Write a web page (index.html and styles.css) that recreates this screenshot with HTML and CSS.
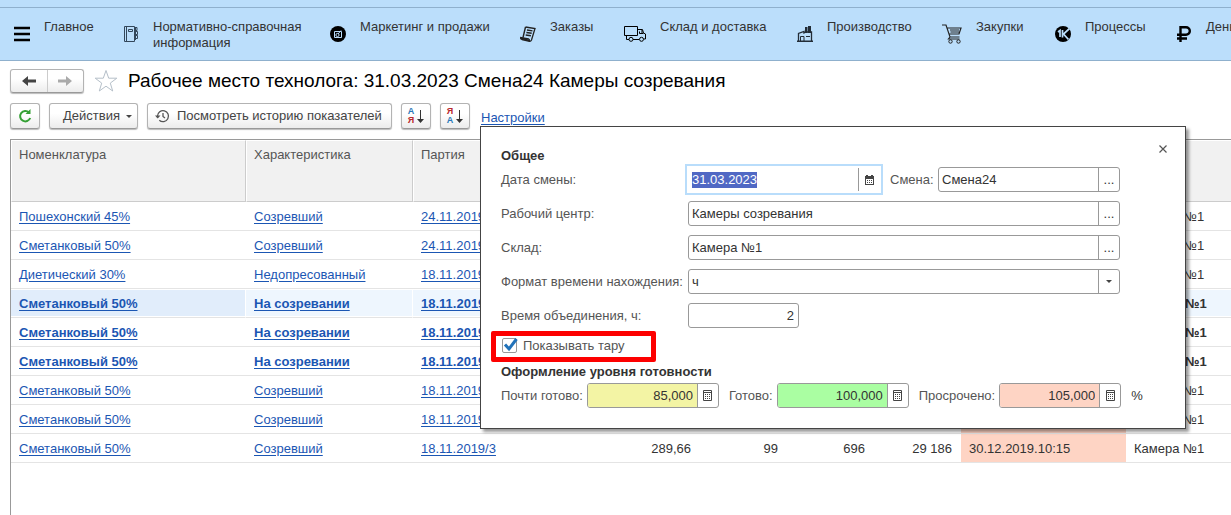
FILE: index.html
```html
<!DOCTYPE html>
<html lang="ru">
<head>
<meta charset="utf-8">
<title>Рабочее место технолога</title>
<link rel="stylesheet" href="styles.css">
</head>
<body>
<svg class="defs" width="0" height="0" aria-hidden="true">
  <symbol id="calc" viewBox="0 0 9 11">
    <path d="M.5.5h8v10h-8zM1 2.500h7" fill="none" stroke="#444"/>
    <path d="M2 4h1v1H2zM4 4h1v1H4zM6 4h1v1H6zM2 6h1v1H2zM4 6h1v1H4zM6 6h1v1H6zM2 8h1v1H2zM4 8h1v1H4zM6 8h1v1H6z" fill="#444"/>
  </symbol>
</svg>
<header class="top">
  <nav class="sections" aria-label="Разделы">
    <a class="section" href="#"><svg width="16" height="16" viewBox="0 0 16 16"><path d="M0 2h16M0 8h16M0 14h16" stroke="#000" stroke-width="2.4"/></svg><span>Главное</span></a>
    <a class="section" href="#"><svg width="16" height="16" viewBox="0 0 16 16"><path d="M1.500 .5h10v15h-10zM3.500 .5v15M5.500 3.500h4v2h-4zM12 1.500h2v3h-2M12 5.500h2.500v3H12M12 9.500h2.500v3H12" fill="none" stroke="#33475a"/><path d="M11 1h2v13h-2z" fill="#33475a"/></svg><span>Нормативно-справочная информация</span></a>
    <a class="section" href="#"><svg width="16" height="16" viewBox="0 0 16 16"><circle cx="8" cy="8" r="8"/><path d="M4.500 5.500h7v6h-7z" fill="none" stroke="#bbdefb"/><circle cx="7.500" cy="9" r="1.600" fill="none" stroke="#bbdefb"/><path d="M8 8l3-3.500" stroke="#bbdefb"/></svg><span>Маркетинг и продажи</span></a>
    <a class="section" href="#"><svg width="16" height="16" viewBox="0 0 16 16"><path d="M5.500 1l9.500 1.500-3.500 11.500q-.7 1.500-2 1.300L2 13.500Q.3 13 .7 11.500l8 1.500q1 .3.500 2" fill="none" stroke="#222" stroke-width="1.300"/><path d="M5.500 1L3 11.500M7 4l5.500.9M6.400 6.500l5.300.8M5.700 9l5.200.8M1 12l8 2.500" stroke="#222" stroke-width="1.400"/></svg><span>Заказы</span></a>
    <a class="section" href="#"><svg width="22" height="16" viewBox="0 0 22 16"><path d="M.5 .5h13v9H.5zM14 3.500h4.500l1 3.500 2 1v5h-2M2.500 10v3.500H5M9 13.500h6M15.500 5.500v2h4M18 4v3" fill="none" stroke="#000"/><circle cx="7" cy="13.300" r="2" fill="#bbdefb" stroke="#000"/><circle cx="17.500" cy="13.300" r="2" fill="#bbdefb" stroke="#000"/></svg><span>Склад и доставка</span></a>
    <a class="section" href="#"><svg width="16" height="16" viewBox="0 0 16 16"><path d="M1.500 15V7.500l5.500-2V7l2-1h5.500v9" fill="none" stroke="#222c36" stroke-width="1.300"/><path d="M8 1h2.500v6H8zM11 0h3v7h-3zM0 14.500h16V16H0z" fill="#222c36"/><path d="M3.500 15v-4.500H7V15M9 10.500h4" fill="none" stroke="#222c36"/></svg><span>Производство</span></a>
    <a class="section" href="#"><svg width="20" height="20" viewBox="0 0 20 20"><path d="M0 1h4l4 12h9.500M5 4h14l-2 6H7M8 6h9M8.500 8H17M8 13l-1.500 2h11" fill="none" stroke="#222" stroke-width="1.200"/><circle cx="8.500" cy="17.500" r="1.700" fill="none" stroke="#222"/><circle cx="16.500" cy="17.500" r="1.700" fill="none" stroke="#222"/></svg><span>Закупки</span></a>
    <a class="section" href="#"><svg width="16" height="16" viewBox="0 0 16 16"><circle cx="8" cy="8" r="8"/><path d="M3 6l2-1.500V11M7.500 4v7.500M14.500 2.500L8.500 8l5 5.500" fill="none" stroke="#bbdefb" stroke-width="1.700"/></svg><span>Процессы</span></a>
    <a class="section" href="#"><svg width="16" height="16" viewBox="0 0 16 16"><path d="M4.500 16V1.200H10a3.700 3.700 0 010 7.600H1M1 12.500h10" fill="none" stroke="#000" stroke-width="2.400"/></svg><span>Деньги</span></a>
  </nav>
</header>
<main class="work">
  <div class="titlebar">
    <div class="history">
      <button class="hbtn" aria-label="Назад"><svg width="14" height="10" viewBox="0 0 14 10"><path d="M0 5l6-5v3.500h8v3H6V10z" fill="#444"/></svg></button>
      <button class="hbtn" aria-label="Вперед"><svg width="14" height="10" viewBox="0 0 14 10"><path d="M14 5L8 0v3.500H0v3h8V10z" fill="#aaa"/></svg></button>
    </div>
    <button class="star" aria-label="В избранное"><svg width="24" height="24" viewBox="0 0 24 24"><path d="M12 1.500l2.700 7.700h8.100l-6.500 4.900 2.400 7.900L12 17.200l-6.700 4.800 2.400-7.900L1.200 9.200h8.100z" fill="#fff" stroke="#b5bfc9"/></svg></button>
    <h1>Рабочее место технолога: 31.03.2023 Смена24 Камеры созревания</h1>
  </div>
  <div class="toolbar">
    <button class="btn square" aria-label="Обновить"><svg width="14" height="14" viewBox="0 0 14 14"><path d="M11 3.500A5.200 5.200 0 1012.200 9" fill="none" stroke="#35a035" stroke-width="2"/><path d="M7.500 5h5V0z" fill="#35a035"/></svg></button>
    <button class="btn actions">Действия <svg width="6" height="3" viewBox="0 0 6 3"><path d="M0 0h6L3 3z" fill="#444"/></svg></button>
    <button class="btn past"><svg width="15" height="14" viewBox="0 0 15 14"><path d="M2.500 8.500V7a5.500 5.500 0 111.800 4.200M8 4v3.500l2 1.500" fill="none" stroke="#555" stroke-width="1.300"/><path d="M0 6.500h5.500L2.700 9.500z" fill="#555"/></svg>Посмотреть историю показателей</button>
    <button class="btn square" aria-label="Сортировать по возрастанию"><span class="sort"><span class="pair"><i class="blue">А</i><i class="red">Я</i></span><svg width="7" height="13" viewBox="0 0 7 13"><path d="M3.500 0v10" stroke="#333"/><path d="M0 9h7l-3.500 4z" fill="#333"/></svg></span></button>
    <button class="btn square" aria-label="Сортировать по убыванию"><span class="sort"><span class="pair"><i class="red">Я</i><i class="blue">А</i></span><svg width="7" height="13" viewBox="0 0 7 13"><path d="M3.500 0v10" stroke="#333"/><path d="M0 9h7l-3.500 4z" fill="#333"/></svg></span></button>
    <a class="link" href="#">Настройки</a>
  </div>
  <div class="gridbox">
    <table>
      <colgroup><col class="c-name"><col class="c-char"><col class="c-lot"><col class="c-num"><col class="c-num"><col class="c-num"><col class="c-num"><col class="c-date"><col></colgroup>
      <thead><tr><th>Номенклатура</th><th>Характеристика</th><th>Партия</th><th></th><th></th><th></th><th></th><th></th><th></th></tr></thead>
      <tbody>
        <tr><td><a href="#">Пошехонский 45%</a></td><td><a href="#">Созревший</a></td><td><a href="#">24.11.2019</a></td><td></td><td></td><td></td><td></td><td></td><td>Камера №1</td></tr>
        <tr><td><a href="#">Сметанковый 50%</a></td><td><a href="#">Созревший</a></td><td><a href="#">24.11.2019</a></td><td></td><td></td><td></td><td></td><td></td><td>Камера №1</td></tr>
        <tr><td><a href="#">Диетический 30%</a></td><td><a href="#">Недопресованный</a></td><td><a href="#">18.11.2019</a></td><td></td><td></td><td></td><td></td><td></td><td>Камера №1</td></tr>
        <tr class="bold current"><td><a href="#">Сметанковый 50%</a></td><td><a href="#">На созревании</a></td><td><a href="#">18.11.2019</a></td><td></td><td></td><td></td><td></td><td></td><td>Камера №1</td></tr>
        <tr class="bold"><td><a href="#">Сметанковый 50%</a></td><td><a href="#">На созревании</a></td><td><a href="#">18.11.2019</a></td><td></td><td></td><td></td><td></td><td></td><td>Камера №1</td></tr>
        <tr class="bold"><td><a href="#">Сметанковый 50%</a></td><td><a href="#">На созревании</a></td><td><a href="#">18.11.2019</a></td><td></td><td></td><td></td><td></td><td></td><td>Камера №1</td></tr>
        <tr><td><a href="#">Сметанковый 50%</a></td><td><a href="#">Созревший</a></td><td><a href="#">18.11.2019</a></td><td></td><td></td><td></td><td></td><td></td><td>Камера №1</td></tr>
        <tr><td><a href="#">Сметанковый 50%</a></td><td><a href="#">Созревший</a></td><td><a href="#">18.11.2019</a></td><td></td><td></td><td></td><td></td><td class="late"></td><td>Камера №1</td></tr>
        <tr><td><a href="#">Сметанковый 50%</a></td><td><a href="#">Созревший</a></td><td><a href="#">18.11.2019/3</a></td><td class="num">289,66</td><td class="num">99</td><td class="num">696</td><td class="num">29 186</td><td class="late">30.12.2019.10:15</td><td>Камера №1</td></tr>
      </tbody>
    </table>
  </div>
</main>
<form class="popup">
  <button type="button" class="close" aria-label="Закрыть"><svg width="8" height="8" viewBox="0 0 8 8"><path d="M.5 .5l7 7M7.500 .5l-7 7" stroke="#555" stroke-width="1.200"/></svg></button>
  <h2>Общее</h2>
  <div class="fields">
    <label for="date">Дата смены:</label>
    <div class="pairrow">
      <div class="field focus"><input id="date" value="31.03.2023"><button type="button" aria-label="Календарь"><svg width="9" height="10" viewBox="0 0 9 10"><path d="M0 1h9v9H0z" fill="#444"/><path d="M1 4h7v5H1z" fill="#fff"/><path d="M1 0h2v2H1zM6 0h2v2H6zM2 5h1v1H2zM4 5h1v1H4zM6 5h1v1H6zM2 7h1v1H2zM4 7h1v1H4zM6 7h1v1H6z" fill="#444"/></svg></button></div>
      <label for="shift">Смена:</label>
      <div class="field shift"><input id="shift" value="Смена24"><button type="button" aria-label="Выбрать смену">...</button></div>
    </div>
    <label for="center">Рабочий центр:</label>
    <div class="field"><input id="center" value="Камеры созревания"><button type="button" aria-label="Выбрать центр">...</button></div>
    <label for="store">Склад:</label>
    <div class="field"><input id="store" value="Камера №1"><button type="button" aria-label="Выбрать склад">...</button></div>
    <label for="format">Формат времени нахождения:</label>
    <div class="field"><select id="format"><option>ч</option></select><span class="drop"><svg width="6" height="3" viewBox="0 0 6 3"><path d="M0 0h6L3 3z" fill="#444"/></svg></span></div>
    <label for="merge">Время объединения, ч:</label>
    <div class="field short"><input id="merge" class="right" value="2"></div>
  </div>
  <label class="check"><span class="box"><input type="checkbox" checked><svg width="16" height="15" viewBox="0 0 16 15"><path d="M3 6.500l4 4.500 7.500-10" fill="none" stroke="#2272b9" stroke-width="3"/></svg></span>Показывать тару</label>
  <h2>Оформление уровня готовности</h2>
  <div class="levels">
    <label for="almost">Почти готово:</label>
    <div class="field level"><input id="almost" class="right yellow" value="85,000"><button type="button" aria-label="Калькулятор"><svg width="9" height="11"><use href="#calc"/></svg></button></div>
    <label for="ready">Готово:</label>
    <div class="field level"><input id="ready" class="right green" value="100,000"><button type="button" aria-label="Калькулятор"><svg width="9" height="11"><use href="#calc"/></svg></button></div>
    <label for="late">Просрочено:</label>
    <div class="field level last"><input id="late" class="right pink" value="105,000"><button type="button" aria-label="Калькулятор"><svg width="9" height="11"><use href="#calc"/></svg></button></div>
    <span>%</span>
  </div>
</form>
<script src="script.js"></script>
</body>
</html>
```
FILE: styles.css
```css
* { box-sizing: border-box; }
body {
  margin: 0;
  height: 100vh;
  overflow: hidden;
  display: flex;
  flex-direction: column;
  position: relative;
  font: 13px/16px "Liberation Sans", Arial, sans-serif;
  color: #333;
  background: #fff;
}
button, input, select { font: inherit; color: inherit; }
button { padding: 0; border: 0; background: none; }
svg { display: block; flex: none; }
.defs { position: absolute; }
h1, h2 { margin: 0; }

.top { flex: none; background: #bbdefb; padding-top: 7px; border-bottom: 1px solid #8fb0cd; }
.sections {
  display: grid;
  grid-template-columns: 109px 207px 190px 104px 173px 145px 113px 121px auto;
  border-top: 1px solid #8fb0cd;
  padding-left: 14px;
  height: 53px;
  overflow: hidden;
}
.section { display: flex; gap: 14px; color: #333; text-decoration: none; align-items: center; }
.section span { align-self: start; padding-top: 11px; }

.work { flex: 1; min-height: 0; display: flex; flex-direction: column; padding: 8px 0 0 10px; }
.titlebar { display: flex; align-items: center; height: 24px; }
.history, .btn {
  border: 1px solid #b3b3b3;
  border-bottom-color: #999;
  border-radius: 3px;
  background: linear-gradient(#fff 40%, #ececec);
  box-shadow: 0 1px 1px #bbb;
}
.history { display: flex; width: 74px; height: 24px; }
.hbtn { flex: 1; display: grid; place-items: center; }
.hbtn + .hbtn { border-left: 1px solid #ccc; }
.star { margin: 0 10px; }
h1 { font-size: 19px; line-height: 24px; font-weight: normal; color: #000; white-space: nowrap; }
.toolbar { display: flex; align-items: center; gap: 9px; height: 26px; margin: 10px 0; }
.btn { height: 26px; display: flex; align-items: center; justify-content: center; color: #444; }
.square { width: 30px; }
.actions { width: 89px; gap: 6px; padding-left: 8px; }
.past { width: 245px; gap: 7px; justify-content: flex-start; padding-left: 7px; }
.sort { display: flex; align-items: center; gap: 3px; }
.pair { display: grid; font: bold 9px/9px "Liberation Sans", Arial, sans-serif; }
.pair i { font-style: normal; }
.blue { color: #2878b8; }
.red { color: #b8282c; }
a { color: #1b56b3; text-underline-offset: 2px; }
.link { margin-left: 2px; padding-top: 3px; }

.gridbox { flex: 1; min-height: 0; overflow: hidden; border: solid #999; border-width: 1px 0 0 1px; }
table { width: 100%; border-collapse: separate; border-spacing: 0; table-layout: fixed; }
.c-name { width: 235px; }
.c-char { width: 167px; }
.c-lot { width: 200px; }
.c-num { width: 87px; }
.c-date { width: 165px; }
th {
  height: 62px;
  padding: 6px 7px;
  vertical-align: top;
  text-align: left;
  font-weight: normal;
  color: #555;
  background: #f1f1f1;
  border: 1px solid #fff;
  border-bottom-color: #ccc;
  border-right-color: #ccc;
}
th:last-child { border-right: 0; }
td { height: 29px; padding: 1px 8px 0; border-bottom: 1px solid #e4e4e4; white-space: nowrap; }
.num { text-align: right; padding-right: 9px; }
.bold { font-weight: bold; }
.current td { background: #eef6fe; border-right: 1px solid #fff; box-shadow: inset 0 1px #fff, inset 0 -1px #fff; }
.current td:first-child { background: #e1edfb; }
.current td:last-child { border-right: 0; }
.late { background: #fed4c4; }

.popup {
  position: absolute;
  left: 480px;
  top: 126px;
  width: 706px;
  padding: 21px 65px 20px 20px;
  background: #fff;
  border: 1px solid #444;
  box-shadow: 3px 3px 3px rgba(0, 0, 0, .4);
}
.close { position: absolute; right: 18px; top: 18px; }
h2 { font-size: 13px; line-height: 16px; }
.popup label { color: #555; }
.fields { display: grid; grid-template-columns: 187px 1fr; row-gap: 9px; align-items: center; padding-top: 3px; }
.pairrow { display: flex; align-items: center; }
.pairrow label { margin: 0 auto 0 10px; }
.field { display: flex; height: 25px; border: 1px solid #999; border-radius: 3px; overflow: hidden; background: #fff; }
.field input, .field select { flex: 1; min-width: 0; width: 0; border: 0; padding: 0 4px 0 3px; outline: 0; background: none; appearance: none; }
.field button, .drop { width: 21px; border-left: 1px solid #999; display: grid; place-items: center; }
.field .right { text-align: right; }
.field .yellow { background: #f3f4a4; }
.field .green { background: #aafea2; }
.field .pink { background: #fed4c4; }
.focus { width: 192px; border-color: #fff; outline: 2px solid #b9ddfb; outline-offset: 1px; border-radius: 0; }
.focus input::selection { background: #5068c4; color: #fff; }
.shift { width: 182px; }
.short { width: 111px; }
.check {
  display: flex;
  align-items: center;
  gap: 5px;
  width: 165px;
  height: 31px;
  margin: 3px 0 2px -10px;
  padding: 0 0 2px 6px;
  border: 5px solid #fd0000;
  border-radius: 2px;
}
.box { display: grid; }
.box > * { grid-area: 1 / 1; }
.box input { appearance: none; margin: 0; width: 15px; height: 15px; border: 1px solid #999; border-radius: 2px; }
.levels { display: flex; align-items: center; padding-top: 3px; margin-right: -60px; }
.levels label { white-space: nowrap; }
.level { width: 132px; margin: 0 10px 0 4px; }
.last { width: 122px; }
```
FILE: script.js
```js
const dateInput = document.getElementById("date");
dateInput.focus();
dateInput.select();
```
